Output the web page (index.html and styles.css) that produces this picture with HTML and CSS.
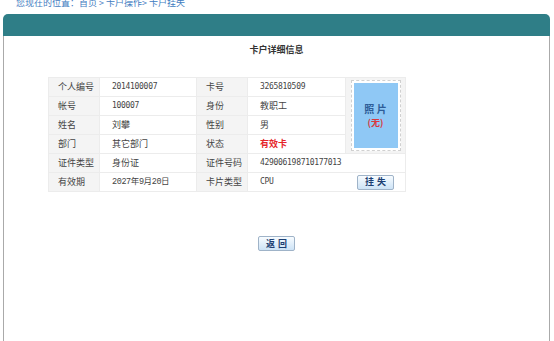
FILE: index.html
```html
<!DOCTYPE html>
<html lang="zh">
<head>
    <meta charset="UTF-8">
    <title>卡户挂失</title>
    <link rel="stylesheet" href="styles.css">
</head>
<body>
    <div class="crumb">您现在的位置：<a href="#">首页</a> &gt; <a href="#">卡户操作</a>&gt; <a href="#">卡户挂失</a></div>

    <div class="panel">
        <div class="panel-head"></div>
        <div class="panel-body">
            <h3 class="title">卡户详细信息</h3>

            <table class="info">
                <tr>
                    <td class="lbl">个人编号</td>
                    <td class="val num">2014100007</td>
                    <td class="lbl">卡号</td>
                    <td class="val num">3265810509</td>
                    <td class="photo-cell" rowspan="4">
                        <div class="stamp">
                            <div class="photo">
                                <b>照 片</b>
                                <span>(无)</span>
                            </div>
                        </div>
                    </td>
                </tr>
                <tr>
                    <td class="lbl">帐号</td>
                    <td class="val num">100007</td>
                    <td class="lbl">身份</td>
                    <td class="val">教职工</td>
                </tr>
                <tr>
                    <td class="lbl">姓名</td>
                    <td class="val">刘攀</td>
                    <td class="lbl">性别</td>
                    <td class="val">男</td>
                </tr>
                <tr>
                    <td class="lbl">部门</td>
                    <td class="val">其它部门</td>
                    <td class="lbl">状态</td>
                    <td class="val status">有效卡</td>
                </tr>
                <tr>
                    <td class="lbl">证件类型</td>
                    <td class="val">身份证</td>
                    <td class="lbl">证件号码</td>
                    <td class="val num" colspan="2">429006198710177013</td>
                </tr>
                <tr>
                    <td class="lbl">有效期</td>
                    <td class="val date">2027年9月20日</td>
                    <td class="lbl">卡片类型</td>
                    <td class="val num" colspan="2">
                        <div class="split">
                            <span>CPU</span>
                            <button type="button" class="btn">挂失</button>
                        </div>
                    </td>
                </tr>
            </table>

            <div class="actions">
                <button type="button" class="btn">返回</button>
            </div>
        </div>
    </div>
</body>
</html>
```

FILE: styles.css
```css
/* page */
body {
    margin: 0;
    font-family: "Noto Sans CJK SC", "Liberation Sans", sans-serif;
    font-size: 9px;
    color: #333;
    background: #fff;
}

.crumb {
    height: 14px;
    line-height: 6px;
    padding-left: 16px;
    color: #3f7cbf;
}

.crumb a {
    color: #3f7cbf;
    text-decoration: none;
}

/* panel */
.panel {
    margin: 0 4px 0 3px;
}

.panel-head {
    height: 22px;
    background-color: #2f7e87;
    border-radius: 5px 5px 0 0;
}

.panel-body {
    height: 305px;
    background-color: #fff;
    border-left: 1px solid #aaa;
    border-right: 1px solid #aaa;
    padding-top: 9px;
}

.title {
    margin: 0 0 22px;
    text-align: center;
    font-size: 9px;
    line-height: 10px;
    color: #333;
}

/* info table */
.info {
    margin-left: 44px;
    width: 358px;
    border-collapse: collapse;
    border: 1px solid #ececec;
}

.info td {
    height: 18px;
    padding: 0;
    border: 1px solid #ececec;
    line-height: 12px;
}

.lbl {
    width: 41px;
    padding-left: 9px !important;
    background-color: #f4f4f4;
    color: #444;
}

.val {
    padding-left: 12px !important;
    color: #444;
}

.num {
    font-family: "DejaVu Sans Mono", "Liberation Mono", monospace;
    font-size: 8px;
    letter-spacing: -0.3px;
}

.date {
    font-family: "Liberation Mono", "Noto Sans CJK SC", monospace;
    font-size: 8.5px;
    letter-spacing: -0.4px;
}

.info tr td:nth-child(2) {
    width: 84px;
}

.status {
    color: #e5242a;
    font-weight: bold;
}

.photo-cell {
    width: 59px;
    background-color: #f4f4f4;
    vertical-align: middle;
}

.stamp {
    width: 44px;
    margin: 0 auto;
    padding: 2px;
    background: #fff;
    border: 1px dashed #d0d0d0;
}

.photo {
    height: 65px;
    background-color: #8fc8f5;
    display: flex;
    flex-direction: column;
    align-items: center;
    justify-content: center;
    gap: 2px;
}

.photo b {
    color: #2d5d98;
    font-size: 10px;
}

.photo span {
    color: #d9383e;
    font-weight: bold;
}

.split {
    display: flex;
    align-items: center;
    justify-content: space-between;
    padding-right: 11px;
}

/* buttons */
.btn {
    width: 37px;
    height: 15px;
    padding: 0 0 0 3px;
    font-family: "Noto Sans CJK SC", sans-serif;
    font-size: 9px;
    font-weight: bold;
    letter-spacing: 3px;
    line-height: 12px;
    color: #1c3f73;
    border: 1px solid #9fb3c8;
    border-radius: 2px;
    background: linear-gradient(#f8fcff, #cde3f6);
    cursor: pointer;
}

.actions {
    margin-top: 44px;
    text-align: center;
}
```
